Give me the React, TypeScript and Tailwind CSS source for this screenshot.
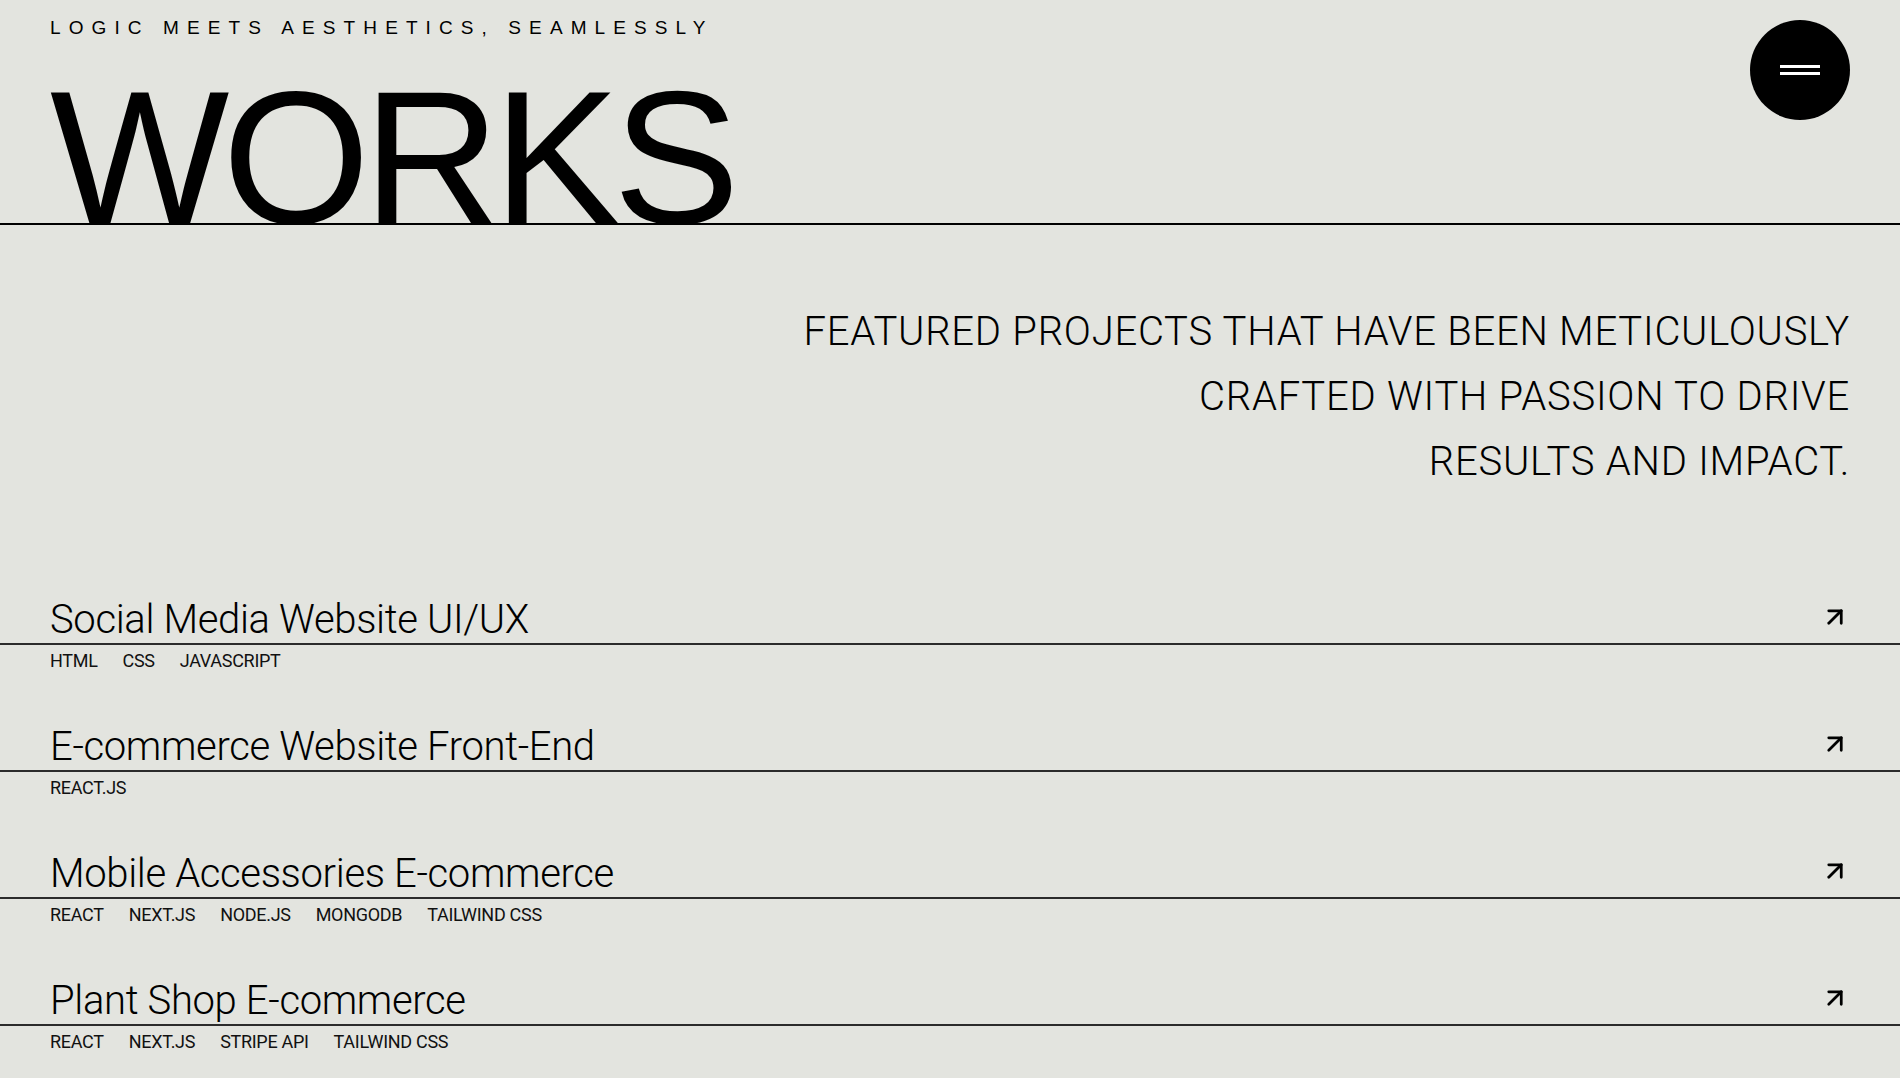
import { ArrowUpRight } from "lucide-react";

type Project = {
  title: string;
  tags: string[];
};

const projects: Project[] = [
  { title: "Social Media Website UI/UX", tags: ["HTML", "CSS", "JAVASCRIPT"] },
  { title: "E-commerce Website Front-End", tags: ["REACT.JS"] },
  {
    title: "Mobile Accessories E-commerce",
    tags: ["REACT", "NEXT.JS", "NODE.JS", "MONGODB", "TAILWIND CSS"],
  },
  {
    title: "Plant Shop E-commerce",
    tags: ["REACT", "NEXT.JS", "STRIPE API", "TAILWIND CSS"],
  },
];

function MenuButton() {
  return (
    <button
      type="button"
      aria-label="Open menu"
      className="mt-5 flex size-[100px] shrink-0 flex-col items-center justify-center gap-[4px] rounded-full bg-black"
    >
      <span className="block h-[3px] w-10 bg-white" />
      <span className="block h-[3px] w-10 bg-white" />
    </button>
  );
}

function ProjectRow({ project }: { project: Project }) {
  return (
    <div className="mb-[54px]">
      <div className="flex items-start justify-between border-b-2 border-[#2b2b2b] px-[50px] pb-[3px]">
        <h2 className="text-[40px] font-light leading-[40px] tracking-[-0.35px] text-black">
          {project.title}
        </h2>
        <ArrowUpRight size={30} strokeWidth={2.2} className="mt-[2px] text-black" />
      </div>
      <ul className="mt-1 flex gap-[25px] px-[50px] text-[18px] leading-6 tracking-[-0.3px] text-[#111]">
        {project.tags.map((tag) => (
          <li key={tag}>{tag}</li>
        ))}
      </ul>
    </div>
  );
}

export default function App() {
  return (
    <div className="min-h-screen overflow-hidden bg-[#e3e4df] font-['Roboto',sans-serif] text-black">
      <header className="flex justify-between border-b-2 border-black px-[50px]">
        <div className="pt-[14px]">
          <p className="font-['Liberation_Sans',sans-serif] text-[19px] leading-7 tracking-[8.1px]">
            LOGIC MEETS AESTHETICS, SEAMLESSLY
          </p>
          <div className="mt-5 h-[161px] overflow-hidden">
            <h1 className="font-['Liberation_Sans',sans-serif] text-[190px] leading-none tracking-[-7px]">
              WORKS
            </h1>
          </div>
        </div>
        <MenuButton />
      </header>

      <p className="mt-[74px] px-[50px] text-right text-[40px] font-light leading-[65px] tracking-[0.75px]">
        FEATURED PROJECTS THAT HAVE BEEN METICULOUSLY
        <br />
        CRAFTED WITH PASSION TO DRIVE
        <br />
        RESULTS AND IMPACT.
      </p>

      <section className="mt-[106px]">
        {projects.map((project) => (
          <ProjectRow key={project.title} project={project} />
        ))}
      </section>
    </div>
  );
}
